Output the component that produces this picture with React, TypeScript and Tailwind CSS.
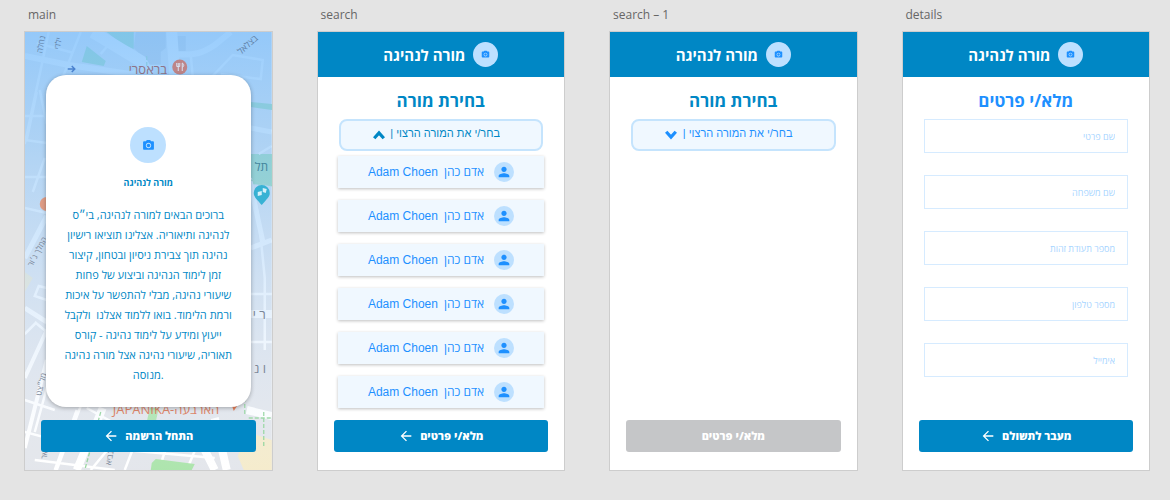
import { useState } from "react";
import type { ReactNode } from "react";
import { MdArrowBack, MdPerson, MdPhotoCamera } from "react-icons/md";

const teachers = [1, 2, 3, 4, 5, 6].map((id) => ({
  id,
  latin: "Adam Choen",
  hebrew: "אדם כהן",
}));

const fields = [
  { id: "first-name", label: "שם פרטי", type: "text" },
  { id: "last-name", label: "שם משפחה", type: "text" },
  { id: "id-number", label: "מספר תעודת זהות", type: "text" },
  { id: "phone", label: "מספר טלפון", type: "tel" },
  { id: "email", label: "אימייל", type: "email" },
];

const intro = [
  "ברוכים הבאים למורה לנהיגה, בי״ס",
  "לנהיגה ותיאוריה. אצלינו תוציאו רישיון",
  "נהיגה תוך צבירת ניסיון ובטחון, קיצור",
  "זמן לימוד הנהיגה וביצוע של פחות",
  "שיעורי נהיגה, מבלי להתפשר על איכות",
  "ורמת הלימוד. בואו ללמוד אצלנו  ולקבל",
  "ייעוץ ומידע על לימוד נהיגה - קורס",
  "תאוריה, שיעורי נהיגה אצל מורה נהיגה",
  "מנוסה.",
];

function Artboard({ name, children }: { name: string; children: ReactNode }) {
  return (
    <section className="flex min-w-0 flex-col">
      <h2 className="mb-2 pl-1 font-['Open_Sans',sans-serif] text-xs leading-4 text-[#666]">
        {name}
      </h2>
      <div className="relative flex flex-1 flex-col border border-[#cdcdcd] bg-white">
        {children}
      </div>
    </section>
  );
}

function AppHeader() {
  return (
    <header
      dir="rtl"
      className="flex h-[45px] shrink-0 items-center justify-center gap-2 bg-[#0087c5]"
    >
      <span className="flex size-[25px] items-center justify-center rounded-full bg-[#bde0ff] text-[#1e90ff]">
        <MdPhotoCamera className="size-[9px]" />
      </span>
      <span className="text-[15px] leading-6 font-bold text-white">מורה לנהיגה</span>
    </header>
  );
}

function ActionButton({
  children,
  disabled = false,
}: {
  children: ReactNode;
  disabled?: boolean;
}) {
  return (
    <button
      type="button"
      dir="rtl"
      disabled={disabled}
      className="relative mx-4 mt-auto mb-[18px] flex h-8 shrink-0 items-center justify-center gap-1.5 rounded-[3px] bg-[#0087c5] text-[11px] font-extrabold text-white disabled:bg-[#c5c6c8]"
    >
      {children}
      {disabled ? null : <MdArrowBack className="size-4" />}
    </button>
  );
}

function TeacherSelect({ labelId, open = false }: { labelId: string; open?: boolean }) {
  const [value, setValue] = useState("");

  return (
    <div className={`relative mx-[21px] ${open ? "text-[#0087c5]" : "text-[#1e90ff]"}`}>
      <select
        aria-labelledby={labelId}
        dir="rtl"
        value={value}
        onChange={(e) => setValue(e.target.value)}
        className="block h-8 w-full appearance-none rounded-lg border-2 border-[#c5e4fd] bg-[#f0f8ff] pr-[41px] pb-1 pl-4 font-['Liberation_Sans',sans-serif] text-[11px]"
      >
        <option value="">בחר/י את המורה הרצוי |</option>
        {teachers.map((t) => (
          <option key={t.id} value={t.id}>
            {t.hebrew}
          </option>
        ))}
      </select>
      <svg
        viewBox="0 0 12 10"
        className="pointer-events-none absolute top-[11px] left-[34px] h-[10px] w-3"
        fill="none"
        stroke="currentColor"
        strokeWidth="3.200"
      >
        <path d={open ? "M1.200 8.300 6 2.900l4.800 5.400" : "M1.200 1.700 6 7.100l4.800-5.400"} />
      </svg>
    </div>
  );
}

function ScreenTitle({
  id,
  className,
  children,
}: {
  id?: string;
  className: string;
  children: ReactNode;
}) {
  return (
    <h3
      id={id}
      dir="rtl"
      className={`mt-3 mb-1.5 text-center text-[17px] leading-6 font-bold ${className}`}
    >
      {children}
    </h3>
  );
}

function MapBackground() {
  return (
    <svg
      aria-hidden="true"
      viewBox="0 0 247 438"
      preserveAspectRatio="xMidYMid slice"
      className="absolute inset-0 h-full w-full"
    >
      <defs>
        <linearGradient id="sky" x1="0" y1="0" x2="0" y2="1">
          <stop offset="0" stopColor="#84c3fd" stopOpacity="0.82" />
          <stop offset="0.25" stopColor="#9accf9" stopOpacity="0.72" />
          <stop offset="0.5" stopColor="#b9dafa" stopOpacity="0.6" />
          <stop offset="0.75" stopColor="#dbeafa" stopOpacity="0.4" />
          <stop offset="1" stopColor="#ffffff" stopOpacity="0.15" />
        </linearGradient>
      </defs>
      <rect width="247" height="438" fill="#dfe2e8" />

      {/* parks and squares */}
      <g fill="#6fd08a">
        <path d="M82 0h27v17l-12-5z" />
        <path d="M62 14 81 29l-2 5-22-4z" />
        <path d="M226 70l21 2v6l-21-3zM226 122h21v32l-21-2z" />
      </g>
      <path d="M111 0h30v16l-5 4v14h-23V20l-4-4zM152 4h9v15h-9z" fill="#b9c0cc" />
      <path d="M223 400l24 8v30h-28l-6-14zM0 240l8 6-8 14z" fill="#f3e8c4" />

      {/* side streets */}
      <g fill="none" stroke="#fff" strokeWidth="2.500">
        <path d="M24 0 0 112M56 0 33 58 28 90M12 11l37 10M76 22l10-12" />
        <path d="M138 34h-22l-10 8M166 23l2 22M186 46l22-23 30 5-2 19-40-5" />
        <path d="M0 84h22M15 58 22 92M0 108l22 3M12 60 2 108M0 145h22M20 126 8 160M0 176l22 5" />
        <path d="M22 256l-8-2-4 10 12 4M0 302l12-12M10 290 22 300" />
        <path d="M0 368l30 10M34 312 10 400M56 374 32 438M52 378 30 438M0 400l60 16M62 376l40 22M86 414l-20 24M10 428l80 10" />
        <path d="M110 412l-10 26M142 414l-8 24M172 414l-10 24M100 418l90 8" />
        <path d="M226 262h21M226 310h21M234 122l13-8" />
        <path d="M226 146l8 40 6 60v72" />
      </g>
      <g fill="none" stroke="#fff">
        <path d="M0 24l44 9 68 10" strokeWidth="6" />
        <path d="M68 0l48 29 8 14" strokeWidth="12" />
        <path d="M147 0l3 44" strokeWidth="11" />
        <path d="M148 22c22 2 30-1 42-9l16-13" strokeWidth="6" />
        <path d="M0 226 22 184M0 276l22 14M226 96l21 4M226 216l21-8M226 154l12 55" strokeWidth="5" />
        <path d="M226 282h21M222 378l25 6M178 414l12 24M190 386l12 52M78 376l-26 62" strokeWidth="8" />
        <path d="M0 346l22-48M22 328l-22 88" strokeWidth="4" />
      </g>
      <path d="M127 431l4-4 39 5-3 6h-41zM125 376h9l-3 14h-9z" fill="#9fe09f" />
      <g fill="none" stroke="#82cf8c" strokeWidth="1.300" strokeDasharray="4 2">
        <path d="M76 380 60 438M220 382v-20M239 380v34M224 386h23M122 24v12M226 148l21 6" />
      </g>
      <rect width="247" height="438" fill="url(#sky)" />

      {/* street names */}
      <g fontFamily="'Open Sans', sans-serif" fontSize="8">
        <g fill="#5f7fa6" textAnchor="middle">
          <text transform="translate(19 13) rotate(-80)">נחלה</text>
          <text transform="translate(36 12) rotate(-80)">ילדי</text>
          <text transform="translate(225 15) rotate(-42)" fontSize="9">בצלאל</text>
        </g>
        <g fill="#7b8798" textAnchor="middle">
          <text transform="translate(15 221) rotate(-62)">המלך ג׳ור</text>
          <text transform="translate(19 353) rotate(-76)">מל״צט</text>
          <text transform="translate(23 420) rotate(-80)">פיאר</text>
          <text transform="translate(88 424) rotate(-80)">הנביא</text>
        </g>
        <text x="228" y="287" fontSize="13" fill="#7b8798">ר י</text>
        <text x="229" y="341" fontSize="13" fill="#7b8798">ו נ</text>
        <text x="230" y="139" fontSize="12" fill="#44869e">תל</text>
        <text x="104" y="42" fontSize="13" fill="#8d7488">בראסרי</text>
        <text x="88" y="382" fontSize="13" fill="#dc8468" direction="ltr">
          JAPANIKA-הארבעה
        </text>
      </g>
      <path d="M43 37h6m-2-3 3 3-3 3" stroke="#4b82cf" strokeWidth="1.500" fill="none" />

      {/* place pins */}
      <circle cx="155" cy="35" r="7.500" fill="#bd8588" />
      <path d="M152 31v3.500h3V31m-1.500 0v8M157.500 31v8m0-8c2 1 2 4 0 4" stroke="#d9e3f2" fill="none" />
      <circle cx="22" cy="172" r="7" fill="#df9c85" />
      <path d="M237 173c-5-6-8-8-8-12a8 8 0 0 1 16 0c0 4-3 6-8 12z" fill="#38b2d4" />
      <path d="M233 160l4-1v4l-4 1zM238 156l4 1-1 4-3-1z" fill="#d5f1fa" />
      <path d="M207 373h6l-4 6z" fill="#e8825c" />
    </svg>
  );
}

export default function App() {
  return (
    <main className="grid min-h-screen grid-cols-1 gap-11 bg-[#e4e4e4] pt-[7px] pr-5 pb-[29px] pl-6 font-['Open_Sans',sans-serif] sm:grid-cols-2 lg:grid-cols-4">
      <Artboard name="main">
        <MapBackground />
        <div className="relative mx-[21px] mt-[43px] mb-3 flex flex-col items-center rounded-[20px] bg-white pt-[52px] pb-[22px] text-[#0087c5] shadow-[0_1px_4px_rgba(0,0,0,0.3)]">
          <span className="flex size-9 items-center justify-center rounded-full bg-[#bde0ff] text-[#1e90ff]">
            <MdPhotoCamera className="size-[13px]" />
          </span>
          <h3 className="mt-3 text-[9px] leading-4 font-bold">מורה לנהיגה</h3>
          <p className="mt-[14px] text-center text-[11px] leading-5 whitespace-pre">
            {intro.map((line) => (
              <span key={line} className="block">
                {line}
              </span>
            ))}
          </p>
        </div>
        <ActionButton>התחל הרשמה</ActionButton>
      </Artboard>

      <Artboard name="search">
        <AppHeader />
        <ScreenTitle id="choose-open" className="text-[#0087c5]">
          בחירת מורה
        </ScreenTitle>
        <TeacherSelect labelId="choose-open" open />
        <ul className="mx-5 mt-[5px] mb-2.5 flex flex-col gap-3">
          {teachers.map((t) => (
            <li key={t.id}>
              <button
                type="button"
                className="flex h-8 w-full items-center justify-end bg-[#f0f8ff] pr-[30px] text-xs text-[#1e90ff] shadow-[0_1px_3px_rgba(0,0,0,0.25)]"
              >
                <span className="font-['Liberation_Sans',sans-serif]">{t.latin}</span>
                <span className="ml-1.5">{t.hebrew}</span>
                <span className="ml-[10px] flex size-5 items-center justify-center rounded-full bg-[#bde0ff]">
                  <MdPerson className="size-4" />
                </span>
              </button>
            </li>
          ))}
        </ul>
        <ActionButton>מלא/י פרטים</ActionButton>
      </Artboard>

      <Artboard name="search – 1">
        <AppHeader />
        <ScreenTitle id="choose-closed" className="text-[#0087c5]">
          בחירת מורה
        </ScreenTitle>
        <TeacherSelect labelId="choose-closed" />
        <ActionButton disabled>מלא/י פרטים</ActionButton>
      </Artboard>

      <Artboard name="details">
        <AppHeader />
        <ScreenTitle className="text-[#1e90ff]">מלא/י פרטים</ScreenTitle>
        <form dir="rtl" className="mx-[21px] mb-3 flex flex-col gap-[22px]">
          {fields.map((f) => (
            <input
              key={f.id}
              id={f.id}
              type={f.type}
              dir="rtl"
              aria-label={f.label}
              placeholder={f.label}
              className="h-[34px] w-full border border-[#d6ebff] px-3 text-[9px] text-[#1e90ff] placeholder:text-[#a8d5ff]"
            />
          ))}
        </form>
        <ActionButton>מעבר לתשולם</ActionButton>
      </Artboard>
    </main>
  );
}
